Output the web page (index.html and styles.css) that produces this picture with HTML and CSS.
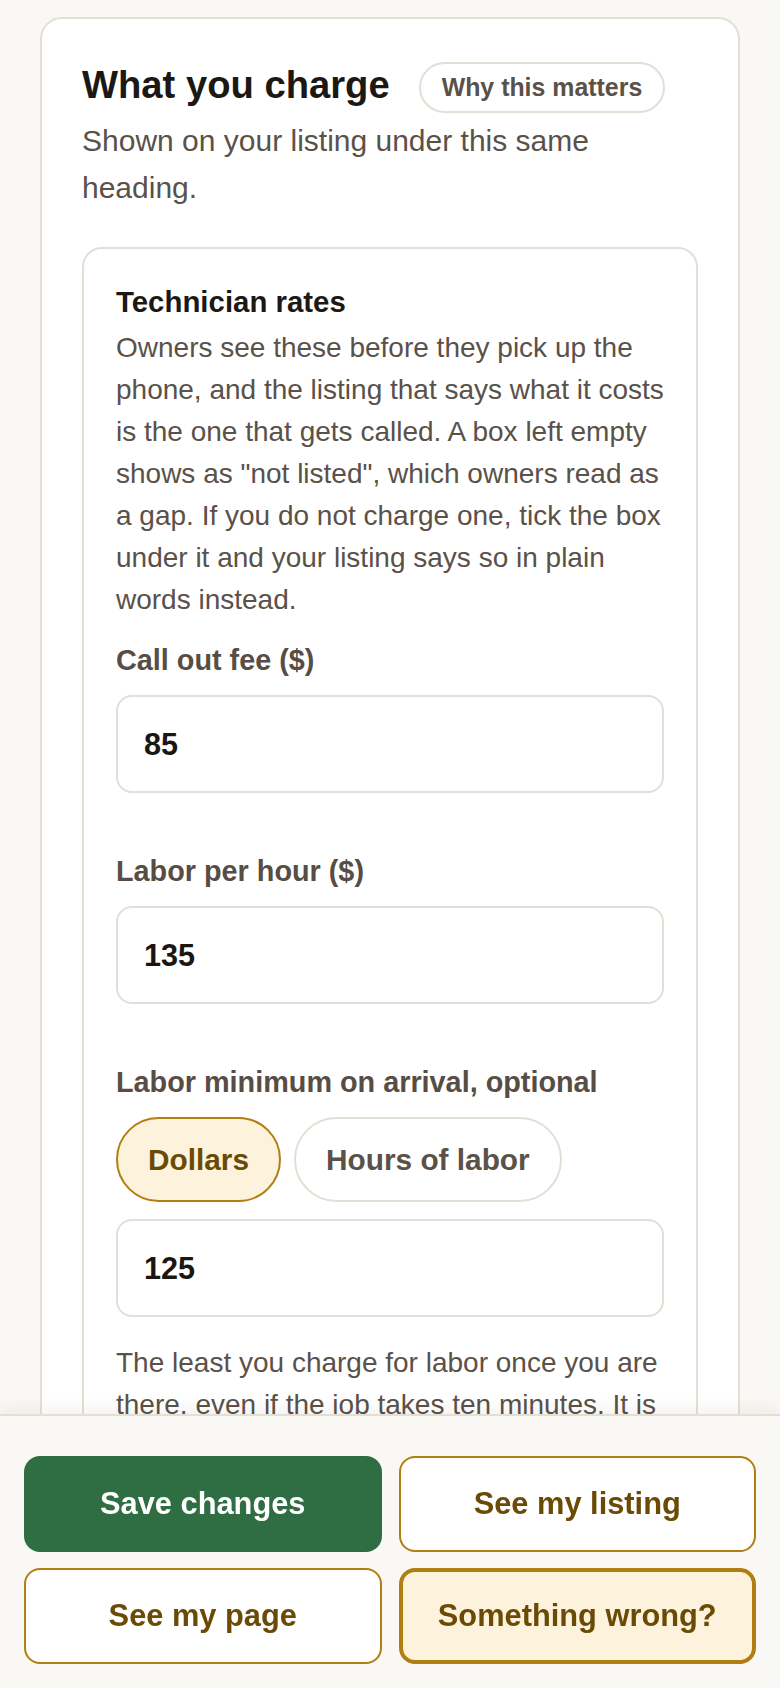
FILE: index.html
```html
<!DOCTYPE html>
<html lang="en">
<head>
<meta charset="utf-8">
<title>What you charge</title>
<link rel="stylesheet" href="styles.css">
</head>
<body>
<main class="page">
  <section class="card">
    <div class="card-head">
      <h2 class="title">What you charge</h2>
      <button class="why" type="button">Why this matters</button>
    </div>
    <p class="sub">Shown on your listing under this same heading.</p>

    <div class="panel">
      <h3 class="panel-title">Technician rates</h3>
      <p class="body">Owners see these before they pick up the phone, and the listing that says what it costs is the one that gets called. A box left empty shows as "not listed", which owners read as a gap. If you do not charge one, tick the box under it and your listing says so in plain words instead.</p>

      <div class="field field-first">
        <label class="label" for="callout">Call out fee ($)</label>
        <input class="input" id="callout" type="text" value="85">
      </div>

      <div class="field">
        <label class="label" for="hourly">Labor per hour ($)</label>
        <input class="input" id="hourly" type="text" value="135">
      </div>

      <div class="field">
        <label class="label" for="minimum">Labor minimum on arrival, optional</label>
        <div class="seg">
          <button class="seg-btn seg-on" type="button">Dollars</button>
          <button class="seg-btn" type="button">Hours of labor</button>
        </div>
        <input class="input input-after-seg" id="minimum" type="text" value="125">
      </div>

      <p class="body help">The least you charge for labor once you are there, even if the job takes ten minutes. It is shown next to your hourly rate so owners know what a short visit will cost them.</p>
      <div class="spacer"></div>
    </div>
  </section>
</main>

<nav class="bar">
  <button class="btn btn-primary" type="button">Save changes</button>
  <button class="btn btn-outline" type="button">See my listing</button>
  <button class="btn btn-outline" type="button">See my page</button>
  <button class="btn btn-warn" type="button">Something wrong?</button>
</nav>
</body>
</html>
```

FILE: styles.css
```css
* { box-sizing: border-box; }

html, body {
  margin: 0;
  padding: 0;
  background: #faf8f4;
  font-family: "Liberation Sans", Arial, sans-serif;
  color: #5a5149;
}

.page {
  padding: 17px 40px 400px;
}

.card {
  background: #ffffff;
  border: 2px solid #e4dfd5;
  border-radius: 22px;
  padding: 43px 40px 40px;
}

.card-head {
  display: flex;
  align-items: flex-start;
  gap: 29px;
}

.title {
  margin: 0;
  font-size: 38.2px;
  line-height: 1.2;
  font-weight: 700;
  color: #1c1813;
}

.why {
  height: 51px;
  padding: 0 21px;
  border: 2px solid #e4dfd5;
  border-radius: 26px;
  background: #ffffff;
  color: #5a5149;
  font-family: inherit;
  font-size: 24.9px;
  font-weight: 700;
}

.sub {
  margin: 5px 0 0;
  font-size: 30px;
  line-height: 46.6px;
  color: #5a5149;
}

.panel {
  margin-top: 36px;
  border: 2px solid #e4dfd5;
  border-radius: 20px;
  padding: 32px 32px 40px;
  background: #ffffff;
}

.panel-title {
  margin: 0;
  font-size: 29.4px;
  line-height: 1.4;
  font-weight: 700;
  color: #1c1813;
}

.body {
  margin: 5px 0 0;
  font-size: 28px;
  line-height: 42px;
  color: #5a5149;
}

.field {
  display: flex;
  flex-direction: column;
  margin-top: 58px;
}

.field-first {
  margin-top: 19px;
}

.label {
  font-size: 28.8px;
  line-height: 40px;
  font-weight: 700;
  color: #574d44;
  margin-bottom: 15px;
}

.input {
  height: 98px;
  width: 100%;
  border: 2px solid #e4dfd5;
  border-radius: 16px;
  padding: 0 26px;
  background: #ffffff;
  font-family: inherit;
  font-size: 30.6px;
  font-weight: 700;
  color: #1a1612;
  outline: none;
}

.seg {
  display: flex;
  gap: 13px;
  margin-bottom: 17px;
}

.seg-btn {
  height: 85px;
  padding: 0 30px;
  border: 2px solid #e4dfd5;
  border-radius: 43px;
  background: #ffffff;
  font-family: inherit;
  font-size: 29.8px;
  font-weight: 700;
  color: #5a5149;
}

.seg-on {
  background: #fdf3dc;
  border-color: #b07e12;
  color: #6b4a05;
}

.help {
  margin-top: 25px;
}

.spacer {
  height: 300px;
}

.bar {
  position: fixed;
  left: 0;
  right: 0;
  bottom: 0;
  height: 274px;
  background: #faf8f4;
  border-top: 2px solid #e4dfd5;
  box-shadow: 0 -6px 14px rgba(60, 50, 30, 0.06);
  display: grid;
  grid-template-columns: 1fr 1fr;
  grid-auto-rows: 96px;
  column-gap: 17px;
  row-gap: 16px;
  padding: 40px 24px 0;
  align-content: start;
}

.btn {
  border-radius: 16px;
  font-family: inherit;
  font-size: 30.8px;
  font-weight: 700;
  background: #ffffff;
  color: #6b4a05;
  border: 2px solid #b07e12;
}

.btn-primary {
  background: #2f6d42;
  border-color: #2f6d42;
  color: #ffffff;
}

.btn-warn {
  background: #fdf3dc;
  border: 4px solid #b07e12;
}
```
